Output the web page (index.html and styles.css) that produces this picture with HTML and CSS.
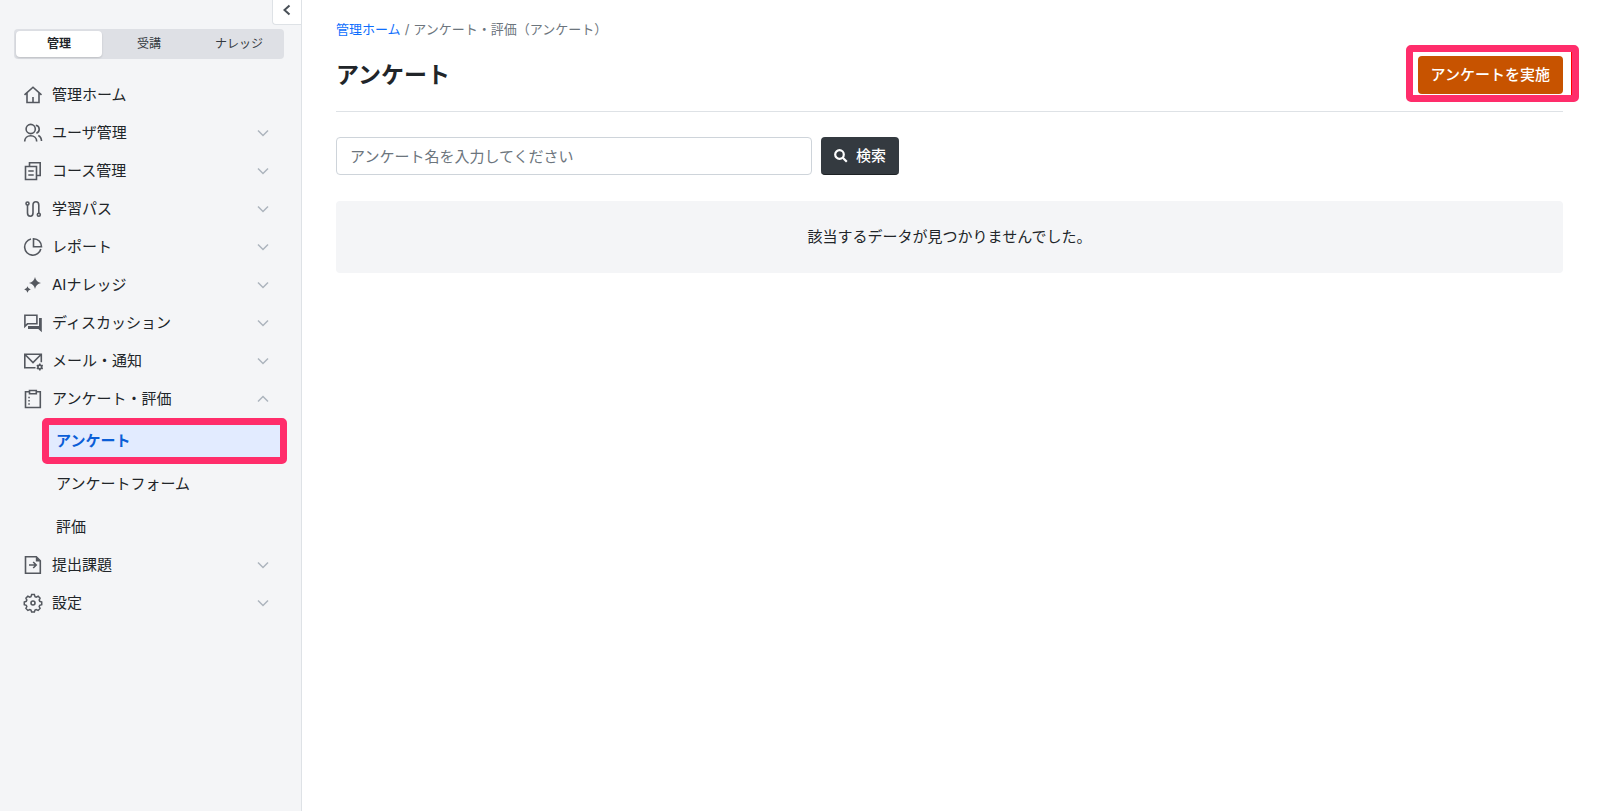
FILE: index.html
```
<!DOCTYPE html>
<html lang="ja">

<head>
    <meta charset="UTF-8">
    <title>アンケート</title>
    <link rel="stylesheet" href="styles.css">
</head>

<body>
<aside class="sidebar">
    <button type="button" class="sidebar-toggle" aria-label="メニューを閉じる">
        <svg width="10" height="14" viewBox="0 0 10 14"><path d="M7.5 2.500 2.500 7l5 4.500"/></svg>
    </button>

    <div class="mode-tabs">
        <button type="button" class="mode-tab active">管理</button>
        <button type="button" class="mode-tab">受講</button>
        <button type="button" class="mode-tab">ナレッジ</button>
    </div>

    <nav class="menu">
        <a href="#" class="menu-item">
            <svg class="icon" viewBox="0 0 20 20"><path d="M1.5 9.8 10 2.2l8.5 7.6M4 8v9.5h12V8M10 12v5.5"/></svg>
            <span>管理ホーム</span>
        </a>
        <a href="#" class="menu-item">
            <svg class="icon" viewBox="0 0 20 20"><circle cx="7.7" cy="6" r="4.6"/><path d="M1.7 18.6c0-3.6 2.6-5.9 6-5.9s6 2.300 6 5.900M12.800 2.300c2.300.5 3.400 2 3.400 3.900s-1.100 3.400-2.800 4M15.300 12.500c2 1 3.200 3 3.200 5.500"/></svg>
            <span>ユーザ管理</span>
            <svg class="chevron" viewBox="0 0 12 12"><path d="m1 3.500 5 5 5-5"/></svg>
        </a>
        <a href="#" class="menu-item">
            <svg class="icon" viewBox="0 0 20 20"><path d="M6.500 5V1.800h10.700v12.700H14M2.500 5.500h11v13h-11zM5.300 10h5.400M5.300 14h5.400"/></svg>
            <span>コース管理</span>
            <svg class="chevron" viewBox="0 0 12 12"><path d="m1 3.500 5 5 5-5"/></svg>
        </a>
        <a href="#" class="menu-item">
            <svg class="icon" viewBox="0 0 20 20"><circle cx="4.500" cy="4.500" r="1.500"/><circle cx="15.800" cy="15.700" r="1.500"/><path d="M4.500 6v8c0 2 1 3.200 2.800 3.200S10 16 10 14V6c0-2 1-3.200 2.900-3.200S15.800 4 15.800 6v8"/></svg>
            <span>学習パス</span>
            <svg class="chevron" viewBox="0 0 12 12"><path d="m1 3.500 5 5 5-5"/></svg>
        </a>
        <a href="#" class="menu-item">
            <svg class="icon" viewBox="0 0 20 20"><path d="M8 2A8.200 8.200 0 1 0 17.800 12M10.500 1.700v8.100h8c0-4.700-3.300-8.100-8-8.100z"/></svg>
            <span>レポート</span>
            <svg class="chevron" viewBox="0 0 12 12"><path d="m1 3.500 5 5 5-5"/></svg>
        </a>
        <a href="#" class="menu-item">
            <svg class="icon icon-fill" viewBox="0 0 20 20"><path d="M12 2q1 5 6 6-5 1-6 6-1-5-6-6 5-1 6-6zM4.500 11.200q.6 2.700 3.300 3.300-2.700.6-3.300 3.300-.6-2.700-3.300-3.300 2.700-.6 3.300-3.300z"/></svg>
            <span>AIナレッジ</span>
            <svg class="chevron" viewBox="0 0 12 12"><path d="m1 3.500 5 5 5-5"/></svg>
        </a>
        <a href="#" class="menu-item">
            <svg class="icon" viewBox="0 0 20 20"><path d="M1.900 2.200h12v8.600H4.500l-2.600 2.500z"/><path class="solid" d="M16 5h2.800v14.300L15.300 16H5v-3h11z"/></svg>
            <span>ディスカッション</span>
            <svg class="chevron" viewBox="0 0 12 12"><path d="m1 3.500 5 5 5-5"/></svg>
        </a>
        <a href="#" class="menu-item">
            <svg class="icon" viewBox="0 0 20 20"><path d="M12.500 16.800H1.800V3.200h16.500v8M2 3.500l8 8 8-8"/><circle cx="16.800" cy="16" r="1.900"/><path d="M16.800 12.600v1.500M16.800 17.900v1.500M13.800 14.300l1.400.8M18.400 16.900l1.400.8M13.800 17.700l1.400-.8M18.400 15.100l1.400-.8"/></svg>
            <span>メール・通知</span>
            <svg class="chevron" viewBox="0 0 12 12"><path d="m1 3.500 5 5 5-5"/></svg>
        </a>
        <a href="#" class="menu-item">
            <svg class="icon" viewBox="0 0 20 20"><path d="M6.500 2.800h-4v15.700h14.800V2.800h-4M6.500 1.500h6.800v3.200H6.500zM5.300 8.500h1.500M5.300 11.800h1.500M5.300 15h1.500"/></svg>
            <span>アンケート・評価</span>
            <svg class="chevron" viewBox="0 0 12 12"><path d="m1 8.500 5-5 5 5"/></svg>
        </a>
        <div class="submenu">
            <a href="#" class="submenu-item active">アンケート</a>
            <a href="#" class="submenu-item">アンケートフォーム</a>
            <a href="#" class="submenu-item">評価</a>
        </div>
        <a href="#" class="menu-item">
            <svg class="icon" viewBox="0 0 20 20"><path d="M2.500 1.800h10.800l4 4v12.500H2.500zM6 10h7M10.200 7l3 3-3 3"/><path class="solid" d="M12.800 1.500v5h4.700z"/></svg>
            <span>提出課題</span>
            <svg class="chevron" viewBox="0 0 12 12"><path d="m1 3.500 5 5 5-5"/></svg>
        </a>
        <a href="#" class="menu-item">
            <svg class="icon" viewBox="0 0 20 20"><path d="m8.500 1.500h3l.7 2.200 1.300.6 2.100-1 2.100 2.100-1 2.100.6 1.300 2.200.7v3l-2.200.7-.6 1.300 1 2.100-2.100 2.100-2.100-1-1.300.6-.7 2.200h-3l-.7-2.200-1.300-.6-2.100 1-2.100-2.100 1-2.100-.6-1.300-2.200-.7v-3l2.200-.7.6-1.300-1-2.100 2.100-2.100 2.100 1 1.300-.6z" transform="translate(.8 .2) scale(.92)"/><circle cx="10" cy="10" r="2"/></svg>
            <span>設定</span>
            <svg class="chevron" viewBox="0 0 12 12"><path d="m1 3.500 5 5 5-5"/></svg>
        </a>
    </nav>
</aside>

<main class="content">
    <div class="breadcrumb">
        <a href="#">管理ホーム</a>
        <span>/</span>
        <span>アンケート・評価（アンケート）</span>
    </div>

    <div class="page-header">
        <h1>アンケート</h1>
        <div class="header-action">
            <button type="button" class="btn btn-primary">アンケートを実施</button>
        </div>
    </div>

    <form class="search-form">
        <input type="text" class="search-input" aria-label="アンケート名" placeholder="アンケート名を入力してください">
        <button type="button" class="btn btn-dark">
            <svg width="14" height="14" viewBox="0 0 14 14"><circle cx="5.500" cy="5.500" r="4.300"/><path d="m8.800 8.800 4 4"/></svg>
            <span>検索</span>
        </button>
    </form>

    <div class="empty-message">該当するデータが見つかりませんでした。</div>
</main>
</body>

</html>
```

FILE: styles.css
```
* {
    box-sizing: border-box;
}

body {
    display: flex;
    min-height: 100vh;
    margin: 0;
    font-family: Inter, "Noto Sans CJK JP", sans-serif;
    font-size: 15px;
    line-height: 24px;
    color: #212529;
    background-color: #fff;
}

a {
    color: inherit;
    text-decoration: none;
}

button,
input {
    font-family: inherit;
}

svg {
    fill: none;
    stroke: currentColor;
}

/* サイドバー */
.sidebar {
    position: relative;
    flex: 0 0 302px;
    padding: 29px 17px 0 14px;
    background-color: #f4f5f7;
    border-right: 1px solid #dee2e6;
}

.sidebar-toggle {
    position: absolute;
    top: 0;
    right: 0;
    display: flex;
    justify-content: center;
    align-items: center;
    width: 29px;
    height: 25px;
    padding: 0 0 5px;
    color: #495057;
    background-color: #fff;
    border: 1px solid #dee2e6;
    border-width: 0 0 1px 1px;
    border-radius: 0 0 0 4px;
    cursor: pointer;
}

.sidebar-toggle svg {
    stroke-width: 2;
}

.mode-tabs {
    display: flex;
    gap: 4px;
    height: 30px;
    padding: 2px;
    background-color: #dee0e5;
    border-radius: 4px;
}

.mode-tab {
    flex: 1;
    padding: 0;
    font-size: 12px;
    line-height: 24px;
    color: #343a40;
    background: none;
    border: none;
    border-radius: 4px;
    cursor: pointer;
}

.mode-tab.active {
    font-weight: 600;
    color: #212529;
    background-color: #fff;
    box-shadow: 0 1px 2px rgba(0, 0, 0, 0.15);
}

.menu {
    margin-top: 17px;
}

.menu-item {
    display: flex;
    align-items: center;
    height: 38px;
    padding: 0 15px 0 9px;
}

.icon {
    width: 20px;
    height: 20px;
    margin-right: 9px;
    color: #54585f;
    stroke-width: 1.6;
}

.icon-fill,
.icon .solid {
    fill: currentColor;
    stroke: none;
}

.chevron {
    width: 12px;
    height: 12px;
    margin-left: auto;
    color: #adb5bd;
    stroke-width: 1.5;
}

.submenu {
    display: flex;
    flex-direction: column;
    gap: 5px;
    padding: 4px 0 0 28px;
}

.submenu-item {
    padding: 7px 14px;
}

.submenu-item.active {
    position: relative;
    font-weight: 700;
    color: #0b5ed7;
    background-color: #e2ebff;
}

/* 強調表示の枠 */
.submenu-item.active::after,
.header-action::after {
    content: "";
    position: absolute;
    border: 7px solid #ff2d6b;
    border-radius: 5px;
    pointer-events: none;
}

.submenu-item.active::after {
    inset: -4px 0;
}

.submenu-item.active {
    margin-right: -3px;
}

/* メイン */
.content {
    flex: 1;
    min-width: 0;
    padding: 19px 34px;
}

.breadcrumb {
    display: flex;
    gap: 4px;
    font-size: 13px;
    line-height: 20px;
    color: #6c757d;
}

.breadcrumb a {
    color: #0d6efd;
}

.page-header {
    display: flex;
    justify-content: space-between;
    align-items: center;
    margin-bottom: 25px;
    padding: 17px 0;
    border-bottom: 1px solid #dee2e6;
}

h1 {
    margin: 0;
    font-size: 23px;
    line-height: 32px;
    font-weight: 700;
}

.header-action {
    position: relative;
}

.header-action::after {
    inset: -11px -16px -8px -12px;
    box-shadow: inset -1px 0 #f00;
}

.btn {
    display: flex;
    align-items: center;
    gap: 8px;
    height: 38px;
    padding: 0 13px;
    font-size: 15px;
    line-height: 24px;
    font-weight: 500;
    color: #fff;
    border: none;
    border-radius: 4px;
    cursor: pointer;
}

.btn-primary {
    background-color: #c75300;
}

.btn-dark {
    background-color: #343a40;
    border-bottom: 1px solid #1d2124;
}

.btn-dark svg {
    stroke-width: 2.2;
}

.search-form {
    display: flex;
    gap: 9px;
    margin-bottom: 26px;
}

.search-input {
    width: 476px;
    height: 38px;
    padding: 0 13px;
    font-size: 15px;
    color: #212529;
    border: 1px solid #ced4da;
    border-radius: 4px;
    outline: none;
}

.search-input::placeholder {
    color: #6c757d;
}

.empty-message {
    padding: 24px;
    text-align: center;
    background-color: #f4f5f7;
    border-radius: 4px;
}
```
